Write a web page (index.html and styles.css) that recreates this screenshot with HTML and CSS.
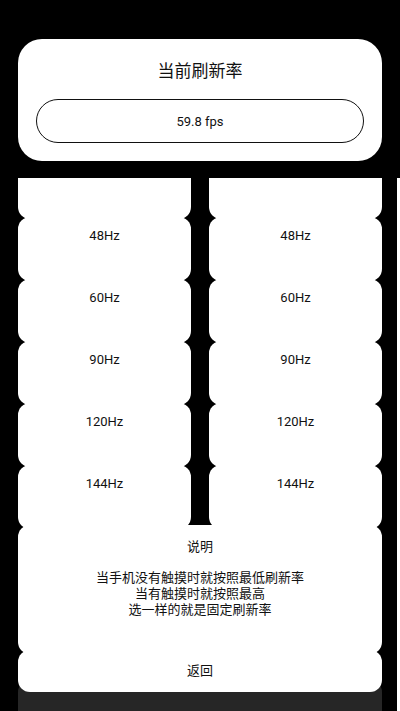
FILE: index.html
```html
<!DOCTYPE html>
<html lang="zh">
<head>
<meta charset="utf-8">
<title>当前刷新率</title>
<link rel="stylesheet" href="styles.css">
</head>
<body>
<div class="screen">
  <section class="summary">
    <h1 class="summary-title">当前刷新率</h1>
    <div class="fps-pill">59.8 fps</div>
  </section>
  <div class="pager">
    <div class="page">
      <div class="rate-grid">
        <div class="rate-col">
          <div class="rate-item rate-item--peek">跟随系统</div>
          <div class="rate-item">48Hz</div>
          <div class="rate-item">60Hz</div>
          <div class="rate-item">90Hz</div>
          <div class="rate-item">120Hz</div>
          <div class="rate-item">144Hz</div>
        </div>
        <div class="rate-col">
          <div class="rate-item rate-item--peek">跟随系统</div>
          <div class="rate-item">48Hz</div>
          <div class="rate-item">60Hz</div>
          <div class="rate-item">90Hz</div>
          <div class="rate-item">120Hz</div>
          <div class="rate-item">144Hz</div>
        </div>
      </div>
      <section class="info-card">
        <div class="info-title">说明</div>
        <p class="info-text">当手机没有触摸时就按照最低刷新率<br>当有触摸时就按照最高<br>选一样的就是固定刷新率</p>
      </section>
      <div class="back-btn">返回</div>
      <div class="footer-bar"></div>
    </div>
    <div class="next-page"></div>
  </div>
</div>
</body>
</html>
```
FILE: styles.css
```css
* { box-sizing: border-box; }
html, body { margin: 0; padding: 0; background: #000; }
body {
  font-family: Roboto, "Noto Sans CJK SC", sans-serif;
  color: #111;
}
.screen {
  width: 400px;
  height: 711px;
  overflow: hidden;
  display: flex;
  flex-direction: column;
  background: #000;
}
.summary {
  margin: 39px 18px 0;
  background: #fff;
  border-radius: 24px;
  padding: 19px 18px 18px;
  flex-shrink: 0;
}
.summary-title {
  margin: 0;
  font-family: "Noto Sans CJK SC", sans-serif;
  font-weight: 400;
  font-size: 17px;
  line-height: 24px;
  text-align: center;
}
.fps-pill {
  margin-top: 17px;
  height: 44px;
  border: 1px solid #111;
  border-radius: 22px;
  display: flex;
  align-items: center;
  justify-content: center;
  font-size: 13px;
}
.pager {
  margin-top: 17px;
  flex: 1;
  min-height: 0;
  overflow: hidden;
  display: flex;
  gap: 15px;
  padding-left: 18px;
}
.page {
  width: 364px;
  flex-shrink: 0;
  display: flex;
  flex-direction: column;
}
.rate-grid {
  display: grid;
  grid-template-columns: 1fr 1fr;
  column-gap: 18px;
  margin-top: -23px;
}
.rate-col {
  display: flex;
  flex-direction: column;
}
.rate-item {
  height: 64px;
  padding-top: 11px;
  line-height: 16px;
  font-size: 13px;
  text-align: center;
  background: #fff;
  border-radius: 12px;
}
.rate-item--peek { padding-top: 7px; }
.rate-item + .rate-item { margin-top: -2px; }
.info-card {
  margin-top: -4px;
  padding: 14px 0 36px;
  background: #fff;
  border-radius: 12px;
  text-align: center;
  font-size: 13px;
  line-height: 16px;
}
.info-title { line-height: 16px; }
.info-text { margin: 15px 0 0; }
.back-btn {
  position: relative;
  z-index: 1;
  margin-top: -4px;
  height: 42px;
  line-height: 42px;
  text-align: center;
  font-size: 13px;
  background: #fff;
  border-radius: 12px;
}
.footer-bar {
  margin-top: -12px;
  height: 44px;
  flex-shrink: 0;
  background: #262626;
  border-radius: 12px;
}
.next-page {
  width: 364px;
  flex-shrink: 0;
  background: #fff;
}
```
